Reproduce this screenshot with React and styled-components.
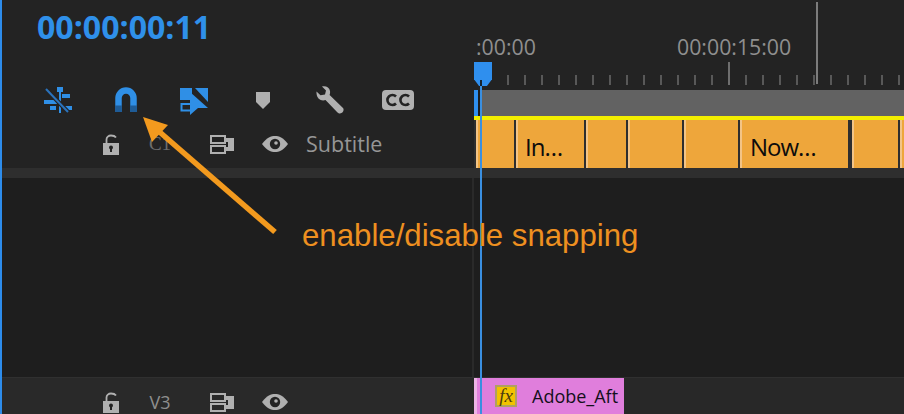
import React from 'react';
import styled, { createGlobalStyle } from 'styled-components';

const Global = createGlobalStyle`
  html, body { margin: 0; padding: 0; background: #232323; }
  body { width: 904px; height: 414px; overflow: hidden; font-family: "Open Sans", "Noto Sans", sans-serif; }
`;

const Page = styled.div`
  position: relative;
  width: 904px;
  height: 414px;
  overflow: hidden;
  box-sizing: border-box;
  border-left: 2px solid #2d8ceb;
  display: grid;
  grid-template-columns: 472px 430px;
  grid-template-rows: 120px 48px 10px 199px 1px 36px;
  background: #232323;
`;

const Header = styled.div`
  display: flex;
  flex-direction: column;
  padding-left: 35px;
`;

const Timecode = styled.div`
  margin-top: 6px;
  margin-bottom: 1px;
  color: #2f90ea;
  font-size: 32.1px;
  line-height: 42px;
  font-weight: 700;
  white-space: nowrap;
`;

const Tools = styled.div`
  margin-top: 36px;
  margin-left: 6px;
  display: flex;
  align-items: center;
  height: 30px;
`;

const ToolSlot = styled.div`
  width: ${p => p.$w || 68}px;
  height: 30px;
  display: flex;
  align-items: center;
`;

const Ruler = styled.div`
  display: flex;
  flex-direction: column;
`;

const Labels = styled.div`
  height: 62px;
  display: flex;
  align-items: flex-end;
  padding-left: 2px;
  color: #8f8f8f;
  font-size: 21.3px;
  line-height: 26px;
`;

const Label = styled.span`
  width: ${p => p.$w}px;
  padding-bottom: 2px;
  white-space: nowrap;
`;

const Ticks = styled.div`
  height: 24px;
  padding-left: 33px;
  display: flex;
  align-items: flex-end;
  position: relative;
`;

const Tick = styled.i`
  flex: none;
  display: block;
  width: 2px;
  margin-right: 15px;
  height: ${p => (p.$major ? 23 : 10)}px;
  margin-bottom: 1px;
  background: ${p => (p.$major ? '#6e6e6e' : '#585858')};
`;

const Handle = styled.div`
  position: absolute;
  left: 0;
  top: 0;
  width: 18px;
  height: 24px;
  background: #2f8fee;
  clip-path: polygon(0 0, 100% 0, 100% 72%, 72% 100%, 28% 100%, 0 72%);
`;

const Cursor = styled.div`
  position: absolute;
  left: 814px;
  top: 2px;
  width: 2px;
  height: 82px;
  background: #7c7c7c;
`;

const WorkBar = styled.div`
  margin-top: 4px;
  height: 26px;
  background: #626262;
  display: flex;
`;

const InPoint = styled.div`
  width: 4px;
  background: #2f8fee;
`;

const YellowLine = styled.div`
  height: 4px;
  background: #f2ee00;
`;

const TrackHead = styled.div`
  display: grid;
  grid-template-columns: 96px 24px 76px 48px 58px 1fr;
  align-items: center;
  color: #9a9a9a;
`;

const Slot = styled.div`
  display: flex;
  justify-content: center;
  align-items: center;
  grid-column: ${p => p.$col};
`;

const TrackLabel = styled.div`
  grid-column: 3;
  font-family: "Liberation Serif", serif;
  font-size: 19px;
  text-align: center;
  color: #6d6d6d;
`;

const TrackCode = styled(TrackLabel)`
  font-family: "Open Sans", sans-serif;
  font-size: 18px;
  color: #8e8e8e;
`;

const TrackName = styled.div`
  grid-column: 6;
  padding-left: 2px;
  font-size: 21.5px;
  line-height: 28px;
  color: #969696;
  white-space: nowrap;
`;

const Clips = styled.div`
  display: flex;
  gap: 2px;
  padding-left: 2px;
  height: 48px;
  background: #2e2e2e;
`;

const Clip = styled.div`
  flex: none;
  box-sizing: border-box;
  width: ${p => p.$w}px;
  height: 48px;
  margin-right: ${p => p.$gap || 0}px;
  background: #eea63b;
  border-left: 2px solid #f3c486;
  color: #0c0c0c;
  font-size: 24px;
  letter-spacing: -1px;
  line-height: 54px;
  padding-left: ${p => p.$pad || 0}px;
  white-space: nowrap;
`;

const Band = styled.div`
  background: #2e2e2e;
`;

const LeftEmpty = styled.div`
  background: #1e1e1e;
`;

const RightEmpty = styled.div`
  background: #1e1e1e;
  border-left: 2px solid #2a2a2a;
  margin-left: -2px;
`;

const Rule = styled.div`
  grid-column: 1 / 3;
  background: #303030;
`;

const BottomHead = styled(TrackHead)`
  background: #292929;
  padding-top: 12px;
`;

const BottomLane = styled.div`
  background: #282828;
  display: flex;
`;

const FxClip = styled.div`
  box-sizing: border-box;
  width: 150px;
  height: 36px;
  background: #e07edc;
  border-left: 3px solid #ecb3e6;
  display: flex;
  align-items: center;
  padding-left: 18px;
  color: #14101a;
  font-size: 18px;
`;

const FxBadge = styled.span`
  box-sizing: border-box;
  width: 22px;
  height: 22px;
  margin-right: 15px;
  background: #f2c200;
  border: 2px solid #b0a060;
  color: #4a3a10;
  font-family: "Liberation Serif", serif;
  font-style: italic;
  font-size: 19px;
  line-height: 17px;
  text-align: center;
`;

const Playhead = styled.div`
  position: absolute;
  left: 478px;
  top: 86px;
  width: 2px;
  height: 328px;
  background: #3a8fe0;
`;

const PlayheadNotch = styled.div`
  position: absolute;
  left: 476px;
  top: 90px;
  width: 2px;
  height: 26px;
  background: #1d1d1d;
`;

const PlayheadTop = styled.div`
  position: absolute;
  left: 478px;
  top: 80px;
  width: 2px;
  height: 6px;
  background: #15222e;
`;

const ArrowArt = styled.svg`
  position: absolute;
  left: -2px;
  top: 0;
  pointer-events: none;
`;

const Callout = styled.div`
  position: absolute;
  left: 300px;
  top: 218px;
  color: #ee9020;
  font-family: "Liberation Sans", Arial, sans-serif;
  font-size: 31.2px;
  line-height: 36px;
  white-space: nowrap;
`;

const BLUE = '#2f8fe6';
const GREY = '#b0b0b0';

const SnapIcon = () => (
  <svg width="30" height="30" viewBox="0 0 30 30">
    <g fill={BLUE}>
      <rect x="14" y="2" width="6" height="5" />
      <rect x="16" y="6" width="2" height="22" />
      <rect x="19" y="9" width="8" height="4" />
      <rect x="1" y="15" width="13" height="4" />
      <rect x="20" y="21" width="9" height="4" />
      <rect x="7" y="21" width="6" height="4" />
    </g>
    <path d="M3 4 L25 27" stroke="#232323" strokeWidth="4.5" />
    <path d="M3 4 L25 27" stroke="#2a73bd" strokeWidth="2" />
  </svg>
);

const MagnetIcon = () => (
  <svg width="24" height="26" viewBox="0 0 24 26">
    <path d="M4.5 25 V11 a7.5 7.5 0 0 1 15 0 V25" fill="none" stroke={BLUE} strokeWidth="6.5" />
    <rect x="1" y="18.5" width="7" height="6.5" fill="#1f5c97" />
    <rect x="16" y="18.5" width="7" height="6.5" fill="#1f5c97" />
  </svg>
);

const LinkedIcon = () => (
  <svg width="30" height="30" viewBox="0 0 30 30">
    <rect x="1" y="3" width="12" height="12" fill={BLUE} />
    <path d="M12 19 H2.5 V25.5 H12" fill="none" stroke={BLUE} strokeWidth="2" />
    <path d="M11 7 L29 23 L19 23 L11 30 Z" fill={BLUE} />
    <path d="M16 3 H29 V17 Z" fill={BLUE} />
  </svg>
);

const MarkerIcon = () => (
  <svg width="16" height="18" viewBox="0 0 16 18">
    <path d="M1 1 H15 V11 L8 18 L1 11 Z" fill={GREY} />
  </svg>
);

const WrenchIcon = () => (
  <svg width="28" height="29" viewBox="0 0 28 29">
    <path
      d="M6 .5 C10 -.3 13.5 1.5 14 5 C14.2 6.5 14 8 13.6 9 L27 22 C28.5 24 27 27.5 24 27.5 C23 27.5 22 27 21.5 26.5 L9.5 14 C5 15.5 0 12.5 .5 5.5 L4.5 9.3 L9 8.5 L10 4.5 Z"
      fill={GREY}
    />
  </svg>
);

const CcIcon = () => (
  <svg width="32" height="20" viewBox="0 0 32 20">
    <rect width="32" height="20" rx="4" fill={GREY} />
    <path d="M14 6.5 A5 5 0 1 0 14 13.5" fill="none" stroke="#232323" strokeWidth="2.6" />
    <path d="M27 6.5 A5 5 0 1 0 27 13.5" fill="none" stroke="#232323" strokeWidth="2.6" />
  </svg>
);

const LockIcon = () => (
  <svg width="17" height="21" viewBox="0 0 17 21">
    <path d="M4.5 10 V5.5 a4.5 4 0 0 1 4.5 -4 C11 1.5 13 2 14 3.5" fill="none" stroke={GREY} strokeWidth="1.8" />
    <path d="M1 9 H17 V21 H1 Z" fill={GREY} />
    <circle cx="9" cy="13.5" r="2" fill="#232323" />
    <rect x="8" y="14" width="2" height="4" fill="#232323" />
  </svg>
);

const SyncIcon = () => (
  <svg width="24" height="19" viewBox="0 0 24 19">
    <rect x="1" y="1" width="14" height="7" fill="none" stroke={GREY} strokeWidth="2" />
    <rect x="1" y="11" width="14" height="7" fill="none" stroke={GREY} strokeWidth="2" />
    <path d="M16 3 H24 V16 H16 V12 H18 V7 H16 Z" fill={GREY} />
  </svg>
);

const EyeIcon = () => (
  <svg width="26" height="16" viewBox="0 0 26 16">
    <path d="M0 8 C5 1.5 9 0 13 0 C17 0 21 1.5 26 8 C21 14.5 17 16 13 16 C9 16 5 14.5 0 8 Z" fill={GREY} />
    <circle cx="13" cy="8" r="5.2" fill="#232323" />
    <circle cx="14" cy="7" r="1.8" fill={GREY} />
  </svg>
);

const tools = [
  { icon: <SnapIcon />, w: 71 },
  { icon: <MagnetIcon />, w: 65 },
  { icon: <LinkedIcon />, w: 76 },
  { icon: <MarkerIcon />, w: 61 },
  { icon: <WrenchIcon />, w: 66 },
  { icon: <CcIcon />, w: 40 },
];

const clips = [
  { w: 38 },
  { w: 68, pad: 7, text: 'In…' },
  { w: 40 },
  { w: 54 },
  { w: 54 },
  { w: 108, pad: 8, text: 'Now…', gap: 2 },
  { w: 46 },
  { w: 10 },
];

const tickCount = 25;

const Track = ({ as: Head, label, name }) => (
  <Head>
    <Slot $col={2}><LockIcon /></Slot>
    {label}
    <Slot $col={4}><SyncIcon /></Slot>
    <Slot $col={5}><EyeIcon /></Slot>
    {name && <TrackName>{name}</TrackName>}
  </Head>
);

const App = () => (
  <Page>
    <Global />

    <Header>
      <Timecode>00:00:00:11</Timecode>
      <Tools>
        {tools.map((t, i) => (
          <ToolSlot key={i} $w={t.w}>{t.icon}</ToolSlot>
        ))}
      </Tools>
    </Header>

    <Ruler>
      <Labels>
        <Label $w={201}>:00:00</Label>
        <Label $w={120}>00:00:15:00</Label>
      </Labels>
      <Ticks>
        <Handle />
        {Array.from({ length: tickCount }, (_, i) => (
          <Tick key={i} $major={i === 13} />
        ))}
      </Ticks>
      <WorkBar><InPoint /></WorkBar>
      <YellowLine />
    </Ruler>

    <Track as={TrackHead} label={<TrackLabel>C1</TrackLabel>} name="Subtitle" />
    <Clips>
      {clips.map((c, i) => (
        <Clip key={i} $w={c.w} $pad={c.pad} $gap={c.gap}>{c.text}</Clip>
      ))}
    </Clips>

    <Band />
    <Band />

    <LeftEmpty />
    <RightEmpty />

    <Rule />

    <Track as={BottomHead} label={<TrackCode>V3</TrackCode>} />
    <BottomLane>
      <FxClip>
        <FxBadge>fx</FxBadge>
        Adobe_Aft
      </FxClip>
    </BottomLane>

    <Cursor />
    <PlayheadNotch />
    <Playhead />
    <PlayheadTop />

    <ArrowArt width="904" height="414" viewBox="0 0 904 414">
      <path d="M275 232 L155 128" stroke="#f39a1e" strokeWidth="5.5" fill="none" />
      <path d="M143 117 L168 125 L152 142 Z" fill="#f39a1e" />
    </ArrowArt>
    <Callout>enable/disable snapping</Callout>
  </Page>
);

export default App;
